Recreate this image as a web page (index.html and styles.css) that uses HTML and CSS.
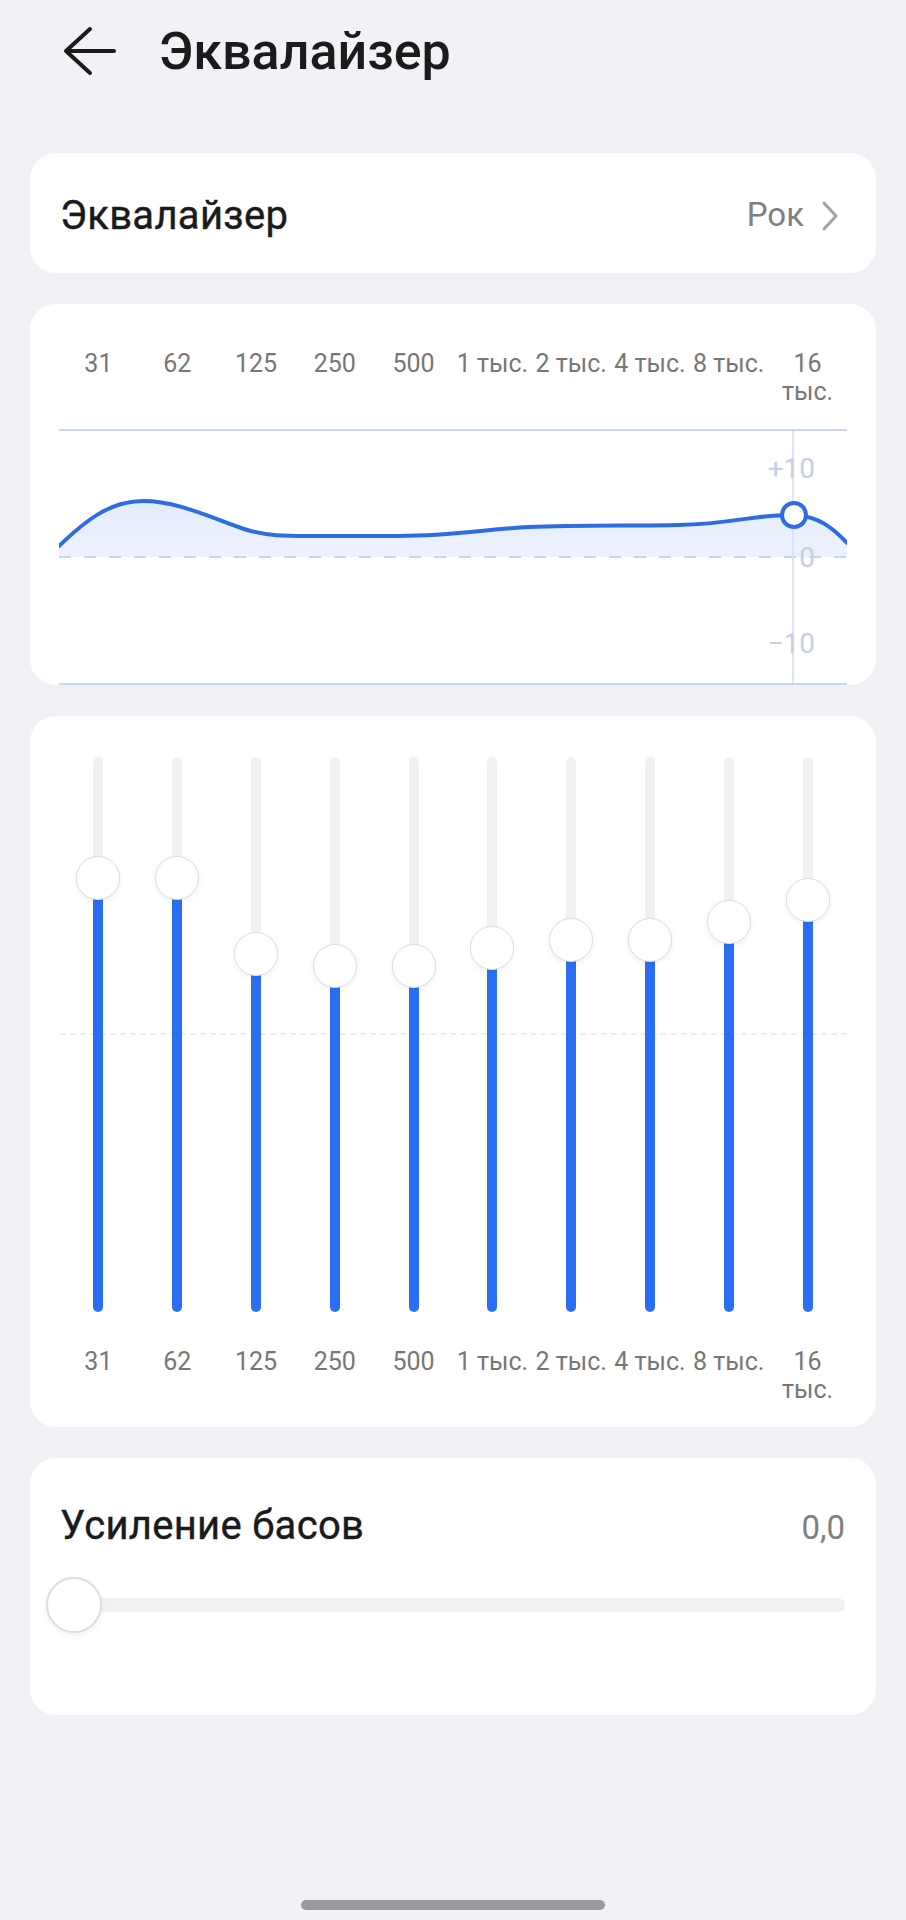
FILE: index.html
```html
<!DOCTYPE html>
<html lang="ru">
<head>
<meta charset="utf-8">
<title>Эквалайзер</title>
<link rel="stylesheet" href="styles.css">
</head>
<body>
<div class="screen">
  <header class="header">
    <svg class="back" width="54" height="50" viewBox="0 0 54 50" aria-hidden="true">
      <path d="M27 3 L3 25 L27 47 M3 25 H51" fill="none" stroke="#1b1b1b" stroke-width="4" stroke-linecap="round" stroke-linejoin="round"/>
    </svg>
    <h1 class="title">Эквалайзер</h1>
  </header>

  <main class="content">
    <section class="card row-card">
      <span class="label">Эквалайзер</span>
      <span class="value-group">
        <span class="value">Рок</span>
        <svg class="chevron" width="20" height="32" viewBox="0 0 20 32" aria-hidden="true">
          <path d="M4 3 L16 16 L4 29" fill="none" stroke="#a3a3a3" stroke-width="3" stroke-linecap="round" stroke-linejoin="round"/>
        </svg>
      </span>
    </section>

    <section class="card chart-card">
      <div class="freqs">
        <span>31</span><span>62</span><span>125</span><span>250</span><span>500</span>
        <span>1 тыс.</span><span>2 тыс.</span><span>4 тыс.</span><span>8 тыс.</span><span>16<br>тыс.</span>
      </div>
      <svg class="chart" width="788" height="256" viewBox="0 0 788 256" aria-hidden="true">
        <defs>
          <linearGradient id="area" x1="0" y1="0" x2="0" y2="1">
            <stop offset="0" stop-color="#e4ecfc"/>
            <stop offset="1" stop-color="#edf2fd"/>
          </linearGradient>
        </defs>
        <line x1="0" y1="1" x2="788" y2="1" stroke="#c9d6f1" stroke-width="2"/>
        <path d="M0,117 C28,90 52,72 84,72 C118,72 150,88 185,100 C210,108 232,107 262,107 L340,107 C392,107 430,100 470,98 C520,96 580,97 620,96 C672,95 700,85 735,86 C760,87 775,100 788,114 L788,128 L0,128 Z" fill="url(#area)"/>
        <line x1="0" y1="128" x2="788" y2="128" stroke="#c8d5f0" stroke-width="2" stroke-dasharray="12 13"/>
        <line x1="734" y1="2" x2="734" y2="256" stroke="#dce5f8" stroke-width="2"/>
        <text class="axis" x="756" y="49" text-anchor="end">+10</text>
        <text class="axis" x="756" y="138" text-anchor="end">0</text>
        <text class="axis" x="756" y="224" text-anchor="end">−10</text>
        <path d="M0,117 C28,90 52,72 84,72 C118,72 150,88 185,100 C210,108 232,107 262,107 L340,107 C392,107 430,100 470,98 C520,96 580,97 620,96 C672,95 700,85 735,86 C760,87 775,100 788,114" fill="none" stroke="#2c6ce4" stroke-width="4" stroke-linecap="round"/>
        <circle cx="735" cy="86" r="12" fill="#fff" stroke="#2c6ce4" stroke-width="4"/>
        <line x1="0" y1="255" x2="788" y2="255" stroke="#c9d6f1" stroke-width="2"/>
      </svg>
    </section>

    <section class="card sliders-card">
      <div class="sliders">
        <div class="col"><div class="track" style="--v:434px"><div class="fill"></div><div class="thumb"></div></div></div>
        <div class="col"><div class="track" style="--v:434px"><div class="fill"></div><div class="thumb"></div></div></div>
        <div class="col"><div class="track" style="--v:358px"><div class="fill"></div><div class="thumb"></div></div></div>
        <div class="col"><div class="track" style="--v:346px"><div class="fill"></div><div class="thumb"></div></div></div>
        <div class="col"><div class="track" style="--v:346px"><div class="fill"></div><div class="thumb"></div></div></div>
        <div class="col"><div class="track" style="--v:364px"><div class="fill"></div><div class="thumb"></div></div></div>
        <div class="col"><div class="track" style="--v:372px"><div class="fill"></div><div class="thumb"></div></div></div>
        <div class="col"><div class="track" style="--v:372px"><div class="fill"></div><div class="thumb"></div></div></div>
        <div class="col"><div class="track" style="--v:390px"><div class="fill"></div><div class="thumb"></div></div></div>
        <div class="col"><div class="track" style="--v:412px"><div class="fill"></div><div class="thumb"></div></div></div>
      </div>
      <div class="freqs freqs-bottom">
        <span>31</span><span>62</span><span>125</span><span>250</span><span>500</span>
        <span>1 тыс.</span><span>2 тыс.</span><span>4 тыс.</span><span>8 тыс.</span><span>16<br>тыс.</span>
      </div>
    </section>

    <section class="card bass-card">
      <div class="bass-head">
        <span class="label">Усиление басов</span>
        <span class="value">0,0</span>
      </div>
      <div class="bass-slider">
        <div class="bass-track"></div>
        <div class="bass-thumb"></div>
      </div>
    </section>
  </main>

  <div class="home-indicator"></div>
</div>
</body>
</html>
```

FILE: styles.css
```css
* { box-sizing: border-box; }

html, body {
  margin: 0;
  padding: 0;
  background: #f1f2f6;
}

body {
  font-family: Roboto, "Noto Sans", "DejaVu Sans", sans-serif;
  color: #1b1b1b;
  width: 906px;
  height: 1920px;
  overflow: hidden;
}

.screen {
  display: flex;
  flex-direction: column;
}

.header {
  height: 102px;
  display: flex;
  align-items: center;
  padding-left: 63px;
  gap: 42px;
}

.back { display: block; flex: none; }

.title {
  margin: 0;
  font-size: 52px;
  line-height: 60px;
  font-weight: 500;
  color: #1b1b1b;
  padding-top: 2px;
}

.content {
  display: flex;
  flex-direction: column;
  gap: 31px;
  padding: 51px 30px 0;
}

.card {
  background: #ffffff;
  border-radius: 26px;
}

.label {
  font-size: 40px;
  line-height: 48px;
  font-weight: 400;
  color: #1a1a1a;
  letter-spacing: 0.3px;
  -webkit-text-stroke: 0.4px #1a1a1a;
}

.value {
  font-size: 33px;
  line-height: 48px;
  color: #808080;
}

.row-card {
  height: 120px;
  padding: 39px 36px 33px 30px;
  display: flex;
  align-items: flex-start;
  justify-content: space-between;
}

.value-group {
  display: flex;
  align-items: center;
  gap: 16px;
  margin-top: -1px;
}

.chevron { display: block; margin-top: 2px; }

/* Frequency labels */
.freqs {
  display: grid;
  grid-template-columns: repeat(10, 1fr);
  font-size: 25px;
  line-height: 28px;
  color: #777777;
  text-align: center;
}

.freqs span { white-space: nowrap; }

.chart-card {
  padding: 46px 29px 0;
  overflow: hidden;
}

.chart {
  display: block;
  margin-top: 23px;
}

.axis {
  font-family: Roboto, "Noto Sans", sans-serif;
  font-size: 28px;
  fill: #c5d0e6;
}

/* Vertical sliders */
.sliders-card {
  padding: 41px 29px 23px;
}

.sliders {
  position: relative;
  display: grid;
  grid-template-columns: repeat(10, 1fr);
  height: 555px;
}

.sliders::before {
  content: "";
  position: absolute;
  left: 1px;
  right: 0;
  top: 276px;
  border-top: 2px dashed #eeeef1;
}

.col {
  display: flex;
  justify-content: center;
}

.track {
  position: relative;
  z-index: 1;
  width: 10px;
  height: 555px;
  border-radius: 5px;
  background: #f2f2f4;
}

.fill {
  position: absolute;
  left: 0;
  right: 0;
  bottom: 0;
  height: var(--v);
  background: #2a6ff3;
  border-radius: 0 0 5px 5px;
}

.thumb {
  position: absolute;
  left: 50%;
  bottom: calc(var(--v) - 22px);
  width: 44px;
  height: 44px;
  margin-left: -22px;
  border-radius: 50%;
  background: #ffffff;
  border: 1.5px solid #dedede;
  box-shadow: 0 2px 6px rgba(0, 0, 0, 0.06);
}

.freqs-bottom {
  margin-top: 36px;
}

/* Bass boost */
.bass-card {
  padding: 44px 31px 82px 30px;
}

.bass-head {
  display: flex;
  justify-content: space-between;
  align-items: baseline;
}

.bass-slider {
  position: relative;
  margin-top: 25px;
  height: 56px;
  display: flex;
  align-items: center;
}

.bass-track {
  flex: 1;
  height: 14px;
  border-radius: 7px;
  background: #f2f2f4;
}

.bass-thumb {
  position: absolute;
  left: -14px;
  top: 0;
  width: 56px;
  height: 56px;
  border-radius: 50%;
  background: #ffffff;
  border: 2px solid #dedede;
  box-shadow: 0 2px 6px rgba(0, 0, 0, 0.06);
}

.home-indicator {
  align-self: center;
  margin-top: 185px;
  width: 304px;
  height: 10px;
  border-radius: 5px;
  background: #9b9b9b;
}
```
